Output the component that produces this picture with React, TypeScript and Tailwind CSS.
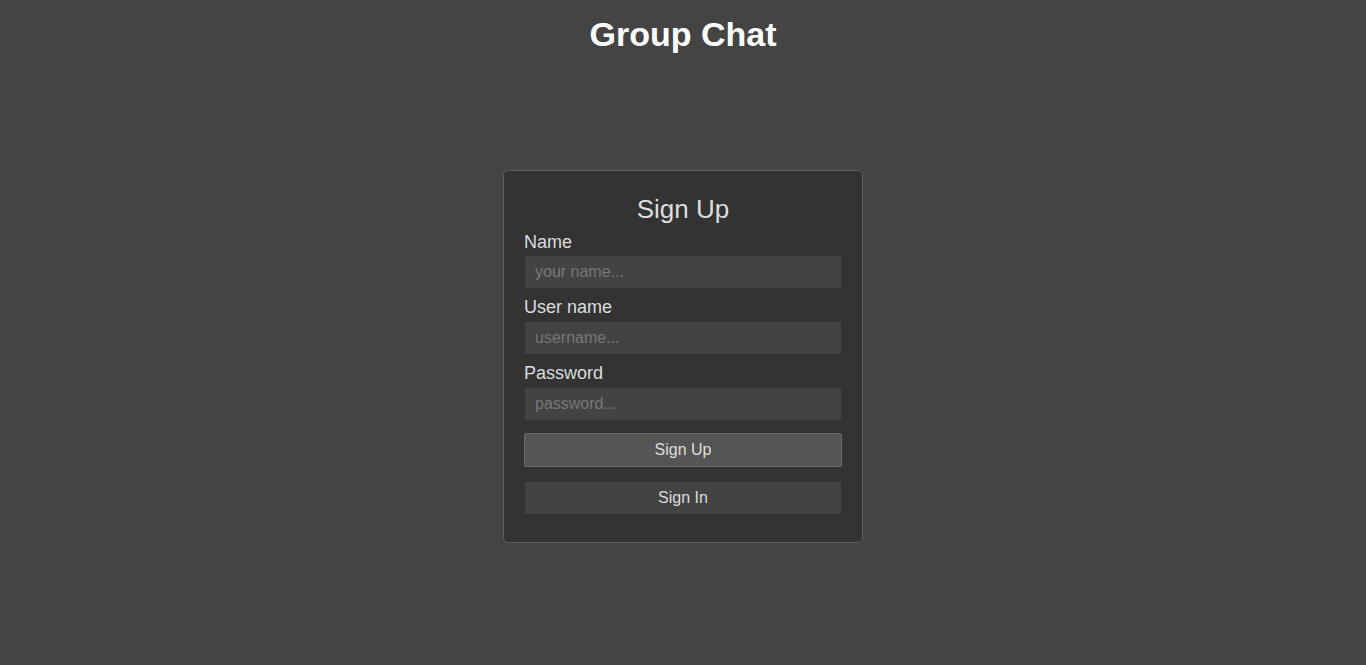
import { useState } from "react";

const SignUpPage = () => {
  const [formData, setFormData] = useState({
    name: "",
    username: "",
    password: "",
  });

  const handleChange = (e: React.ChangeEvent<HTMLInputElement>) => {
    setFormData((prev) => ({
      ...prev,
      [e.target.name]: e.target.value,
    }));
  };

  const handleSubmit = (e: React.FormEvent) => {
    e.preventDefault();
  };

  return (
    <main className="flex min-h-screen flex-col items-center bg-[#444444] font-['Liberation_Sans',Arial,sans-serif]">
      <h1 className="mt-[15px] text-[34px] font-bold leading-[39px] text-white">
        Group Chat
      </h1>

      <form
        onSubmit={handleSubmit}
        className="mt-[116px] flex w-[360px] flex-col rounded-[5px] border border-[#5e5e5e] bg-[#333333] px-5 pb-[28px] pt-[23px]"
      >
        <h2 className="text-center text-[26px] leading-[30px] text-[#dddddd]">
          Sign Up
        </h2>

        <label className="mt-[8px] block text-[18px] leading-[21px] text-[#dddddd]">
          Name
        </label>
        <input
          type="text"
          name="name"
          value={formData.name}
          onChange={handleChange}
          placeholder="your name..."
          className="mx-px mt-[3px] h-8 bg-[#434343] px-[10px] text-[16px] text-[#dddddd] outline-none placeholder:text-[#777777]"
        />

        <label className="mt-[9px] block text-[18px] leading-[21px] text-[#dddddd]">
          User name
        </label>
        <input
          type="text"
          name="username"
          value={formData.username}
          onChange={handleChange}
          placeholder="username..."
          className="mx-px mt-[4px] h-8 bg-[#434343] px-[10px] text-[16px] text-[#dddddd] outline-none placeholder:text-[#777777]"
        />

        <label className="mt-[9px] block text-[18px] leading-[21px] text-[#dddddd]">
          Password
        </label>
        <input
          type="password"
          name="password"
          value={formData.password}
          onChange={handleChange}
          placeholder="password..."
          className="mx-px mt-[4px] h-8 bg-[#434343] px-[10px] text-[16px] text-[#dddddd] outline-none placeholder:text-[#777777]"
        />

        <button
          type="submit"
          className="mt-[13px] h-[34px] rounded-[2px] border border-[#6a6a6a] bg-[#555555] text-[16px] text-[#dddddd]"
        >
          Sign Up
        </button>

        <button
          type="button"
          className="mx-px mt-[15px] h-8 bg-[#434343] text-[16px] text-[#dddddd]"
        >
          Sign In
        </button>
      </form>
    </main>
  );
};

export default SignUpPage;
